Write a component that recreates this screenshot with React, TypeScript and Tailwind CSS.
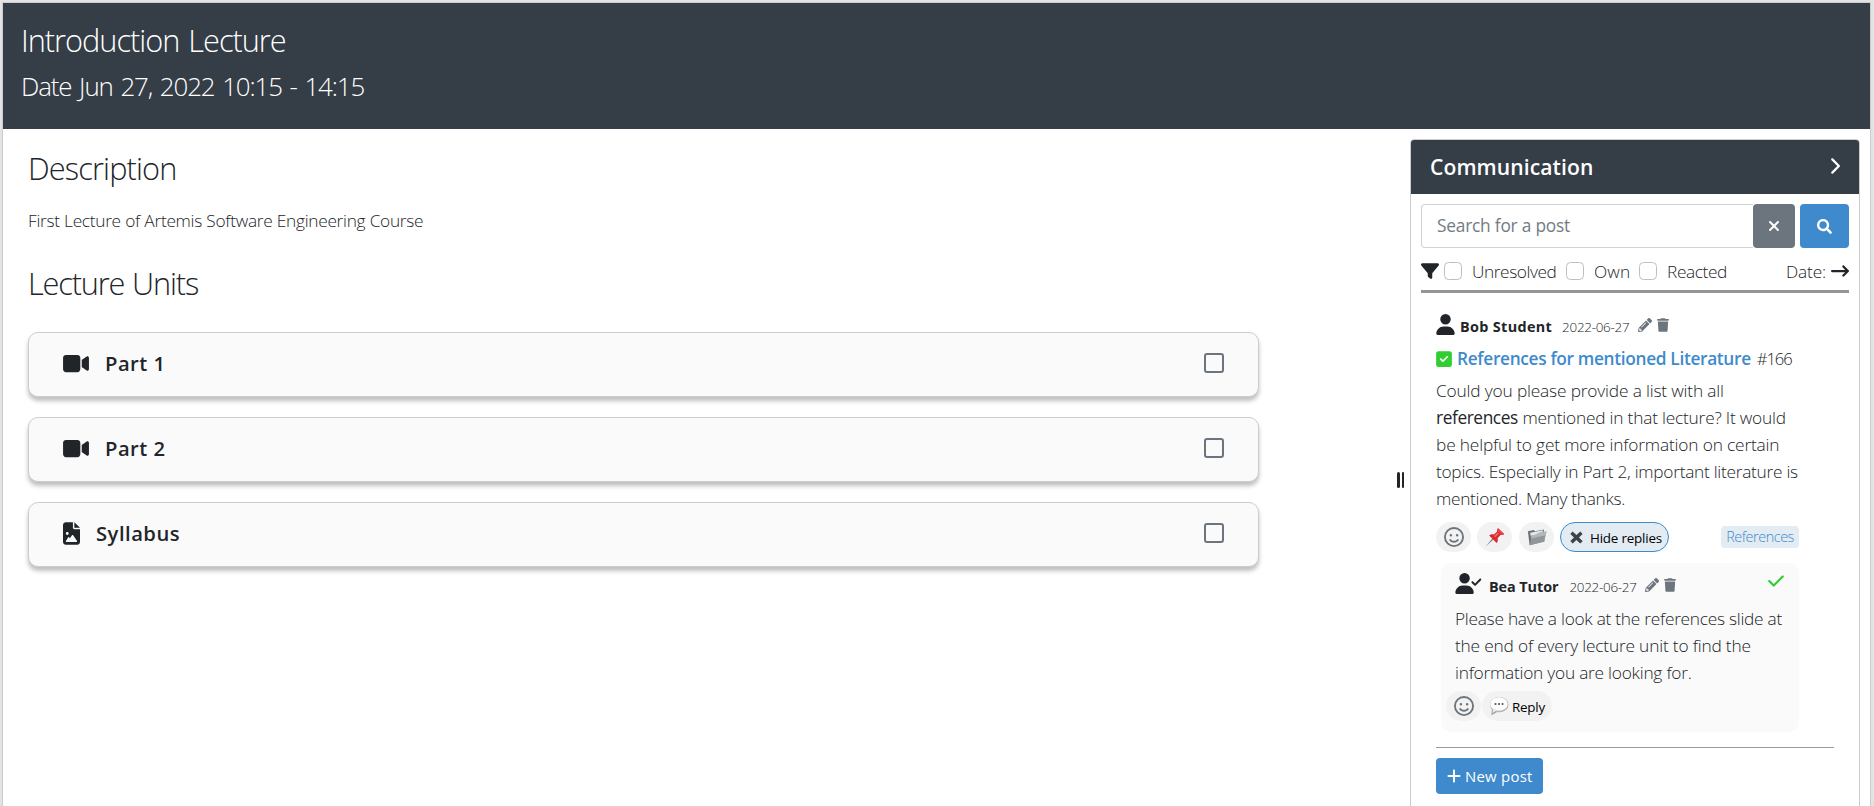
import type { ReactNode } from "react";
import { FaPencilAlt, FaSearch } from "react-icons/fa";
import {
  FaArrowRightLong,
  FaCheck,
  FaChevronRight,
  FaFileImage,
  FaFilter,
  FaPlus,
  FaRegFaceSmile,
  FaSquareCheck,
  FaTrash,
  FaUser,
  FaUserCheck,
  FaVideo,
  FaXmark,
} from "react-icons/fa6";

function PinIcon() {
  return (
    <svg viewBox="0 0 20 20" className="h-5 w-5">
      <path d="M.8 19.200 7.600 11l1.300 1.200Z" fill="#7f8990" />
      <path d="M4.200 8.400c1.300-1.200 3.200-1.300 4.700-.8l3.300-3c-.4-1.200 0-2.600.9-3.400l6 5.700c-1 1-2.200 1.300-3.400.9l-3.100 3.500c.6 1.600.3 3.500-1 4.800Z" fill="#d9282e" />
      <path d="m9 8.900 3.900-3.500 1.200 1.200-3.700 3.700Z" fill="#f4676a" />
      <path d="m13.100 1.200 6 5.700c-.7.700-1.400 1-2.200 1l-4.700-4.500c0-.9.300-1.600.9-2.200Z" fill="#ec4347" />
    </svg>
  );
}

function FolderIcon() {
  return (
    <svg viewBox="0 0 20 20" className="h-5 w-5">
      <path d="M.9 4.200 6.800 3l1.300 1.300 8.700-1.700.6 11.600L2.600 18.200Z" fill="#6a7274" />
      <path d="m3.200 5.800 12.600-2.500.3 4L3.800 9.400Z" fill="#e4e7e7" />
      <path d="m4.600 8.600 5.300-1.200 1.400-1.500 8.200-1.500-2.400 10.400L2.800 18.200Z" fill="#8f9799" />
      <path d="m4.600 8.600 5.300-1.200 1.400-1.500 8.200-1.500-1 3.900L4 11.500Z" fill="#b2b8b9" />
    </svg>
  );
}

function SpeechIcon() {
  return (
    <svg viewBox="0 0 20 20" className="h-5 w-5">
      <path d="M3 12.500 2.300 19.200l6.900-3.600Z" fill="#a2a2a2" />
      <ellipse cx="10.200" cy="8.700" rx="9.300" ry="7.600" fill="#b4b4b4" />
      <ellipse cx="9.900" cy="8" rx="8.800" ry="6.800" fill="#fdfdfd" />
      <path d="M4.400 12 3.400 17.200l4.600-3.100Z" fill="#ececec" />
      <path d="M5.600 7.200h1.800v1.600H5.600zM9.100 7.200h1.800v1.600H9.100zM12.600 7.200h1.800v1.600h-1.800z" fill="#333" />
    </svg>
  );
}

function HeavyCross() {
  return (
    <svg viewBox="0 0 13 13" className="h-[13px] w-[13px]">
      <path d="M2.600.5 6.500 4 10.300.5l2.300 2.400L9 6.500l3.700 3.700-2.500 2.300-3.800-3.600-3.700 3.600-2.400-2.400L4 6.500.3 2.900Z" fill="#414447" />
    </svg>
  );
}

function Unit({ icon, title, tracking }: { icon: ReactNode; title: string; tracking: string }) {
  return (
    <div className="flex h-[65px] items-center justify-between rounded-[10px] border border-[#cdcdcd] bg-[#fafafa] pr-[34px] pb-[3px] pl-[34px] shadow-[0_4px_4px_rgba(0,0,0,0.25)]">
      <div className="flex items-center gap-4 text-[#212529]">
        {icon}
        <span className={`text-[20.2px] leading-8 font-semibold ${tracking}`}>{title}</span>
      </div>
      <span className="h-5 w-5 rounded-[3px] border-2 border-[#6c757d]" />
    </div>
  );
}

function Filter({ label, className }: { label: string; className: string }) {
  return (
    <label className={`flex items-center gap-2.5 ${className}`}>
      <span className="h-[18px] w-[18px] rounded-[4.5px] border border-[#bfbfbf] bg-white" />
      {label}
    </label>
  );
}

function Chip({ children, className = "" }: { children: ReactNode; className?: string }) {
  return <button className={`flex h-[30px] items-center rounded-full ${className}`}>{children}</button>;
}

export default function App() {
  return (
    <div className="h-[806px] overflow-hidden bg-[#e3e3e3] pt-0.5 pr-[3px] pl-0.5 font-['Open_Sans',sans-serif] font-light text-[#212529]">
      <div className="h-[804px] border-x border-t border-[#ccc] bg-white">
        <header className="h-[126px] bg-[#353d47] pt-[18px] pl-[18px] text-white">
          <h1 className="text-[30.7px] leading-[38px] tracking-[-1px] [word-spacing:2px]">Introduction Lecture</h1>
          <h2 className="mt-[11px] text-[25.9px] leading-8 tracking-[-1.1px] [word-spacing:2px]">Date Jun 27, 2022 10:15 - 14:15</h2>
        </header>

        <div className="flex h-[677px] items-start">
          <main className="ml-[25px] w-[1231px] pt-5">
            <h3 className="text-[30.7px] leading-[38px] tracking-[-0.85px]">Description</h3>
            <p className="mt-5 text-[17.3px] leading-[27px] tracking-[-0.29px] [word-spacing:0.2px]">
              First Lecture of Artemis Software Engineering Course
            </p>
            <h3 className="mt-[30px] text-[30.7px] leading-[38px] tracking-[-1.15px] [word-spacing:1px]">Lecture Units</h3>
            <div className="mt-[30px] flex flex-col gap-5">
              <Unit icon={<FaVideo className="h-[23px] w-[26px]" />} title="Part 1" tracking="tracking-[0.5px]" />
              <Unit icon={<FaVideo className="h-[23px] w-[26px]" />} title="Part 2" tracking="tracking-[0.5px]" />
              <Unit icon={<FaFileImage className="h-[23px] w-[17px]" />} title="Syllabus" tracking="tracking-[0.5px]" />
            </div>
          </main>

          <div className="mt-[343px] ml-[138px] flex h-4 w-[7px] justify-between">
            <span className="w-[2.5px] rounded-sm bg-[#212529]" />
            <span className="w-[2.5px] rounded-sm bg-[#212529]" />
          </div>

          <aside className="mt-2.5 ml-1.5 h-[700px] w-[450px] rounded-t border border-[#ccc]">
            <div className="flex h-[54px] items-center justify-between rounded-t-[3px] bg-[#353d47] pr-[19px] pl-[19px] text-white">
              <span className="text-[21.1px] leading-8 font-semibold tracking-[0.08px]">Communication</span>
              <FaChevronRight className="mb-0.5 h-[18px] w-[11px]" />
            </div>

            <div className="mx-2.5 mt-2.5 flex h-11">
              <div className="flex w-[332px] items-center rounded-l border border-r-0 border-[#ced4da] pl-[15px] text-[17.3px] font-normal tracking-[-0.2px] text-[#727b83]">
                Search for a post
              </div>
              <button className="flex w-[42px] items-center justify-center rounded bg-[#6c757d] text-white">
                <FaXmark className="h-4 w-4" />
              </button>
              <button className="ml-[5px] flex w-[49px] items-center justify-center rounded bg-[#3e8acc] text-white">
                <FaSearch className="h-[15px] w-[15px]" />
              </button>
            </div>

            <div className="mx-2.5 flex h-[45px] items-center border-b-[3px] border-[#959595] pt-1 text-[17.3px] leading-[27px]">
              <FaFilter className="mr-[5px] h-[18px] w-[18px]" />
              <Filter label="Unresolved" className="w-[122px] tracking-[-0.42px]" />
              <Filter label="Own" className="w-[73px] tracking-[0.1px]" />
              <Filter label="Reacted" className="tracking-[-0.39px]" />
              <span className="ml-auto tracking-[-0.15px]">Date:</span>
              <FaArrowRightLong className="ml-[5px] h-[18px] w-[18px]" />
            </div>

            <article className="ml-[25px] w-[398px] border-b border-[#999] pt-5">
              <div className="flex h-[22px] items-center">
                <FaUser className="h-[21px] w-[19px]" />
                <span className="mt-[5px] ml-[5px] text-[14.4px] leading-5 font-bold tracking-[0.34px]">Bob Student</span>
                <span className="mt-[5px] ml-2.5 text-[13.4px] leading-5 tracking-[-0.26px]">2022-06-27</span>
                <FaPencilAlt className="mt-0.5 ml-[9px] h-3.5 w-3.5 text-[#6c757d]" />
                <FaTrash className="mt-0.5 ml-[5px] h-3.5 w-3 text-[#6c757d]" />
              </div>
              <div className="mt-2.5 flex h-[27px] items-center text-[17.3px] leading-[27px]">
                <FaSquareCheck className="h-[18px] w-4 text-[#32cd32]" />
                <span className="ml-[5px] font-semibold tracking-[-0.33px] text-[#3e8acc]">References for mentioned Literature</span>
                <span className="ml-1.5 text-[16.6px] tracking-[-1.1px]">#166</span>
              </div>
              <p className="mt-[5px] text-[17.3px] leading-[27px] whitespace-nowrap">
                <span className="tracking-[-0.16px]">Could you please provide a list with all</span>
                <br />
                <span className="font-normal tracking-[-0.4px]">references</span>{" "}
                <span className="tracking-[-0.2px]">mentioned in that lecture? It would</span>
                <br />
                <span className="tracking-[-0.16px]">be helpful to get more information on certain</span>
                <br />
                <span className="tracking-[-0.27px]">topics. Especially in Part 2, important literature is</span>
                <br />
                <span className="tracking-[-0.3px]">mentioned. Many thanks.</span>
              </p>

              <div className="mt-2.5 flex w-[363px] items-center">
                <Chip className="w-[35px] justify-center bg-[#f2f2f2] text-[#6c757d]">
                  <FaRegFaceSmile className="h-5 w-5" />
                </Chip>
                <Chip className="ml-1.5 w-[35px] justify-center bg-[#f2f2f2]">
                  <PinIcon />
                </Chip>
                <Chip className="ml-[7px] w-[35px] justify-center bg-[#f2f2f2]">
                  <FolderIcon />
                </Chip>
                <Chip className="ml-1.5 w-[109px] border border-[#3e8acc] bg-[#e3ebf3] pl-[9px] text-black">
                  <HeavyCross />
                  <span className="mt-0.5 ml-[7px] text-[13.4px] leading-5 font-normal tracking-[-0.2px] whitespace-nowrap">Hide replies</span>
                </Chip>
                <span className="ml-auto flex h-[22px] w-[78px] items-center justify-center rounded bg-[#e3ebf3] text-[14.4px] tracking-[-0.44px] text-[#3e8acc]">
                  References
                </span>
              </div>

              <div className="mt-[11px] mb-[15px] ml-[5px] h-[169px] w-[358px] rounded-[10px] bg-[#fafafa] pt-2.5 pl-[5px]">
                <div className="flex h-[22px] items-center pr-[15px] pl-[9px]">
                  <FaUserCheck className="mb-px h-[21px] w-[27px]" />
                  <span className="mt-[5px] ml-[7px] text-[14.4px] leading-5 font-bold tracking-[-0.07px]">Bea Tutor</span>
                  <span className="mt-[5px] ml-[11px] text-[13.4px] leading-5 tracking-[-0.26px]">2022-06-27</span>
                  <FaPencilAlt className="mt-0.5 ml-2 h-3.5 w-3.5 text-[#6c757d]" />
                  <FaTrash className="mt-0.5 ml-[5px] h-3.5 w-3 text-[#6c757d]" />
                  <FaCheck className="mb-1.5 ml-auto h-[18px] w-4 text-[#32cd32]" />
                </div>
                <p className="mt-2.5 pl-[9px] text-[17.3px] leading-[27px] whitespace-nowrap">
                  <span className="tracking-[-0.26px]">Please have a look at the references slide at</span>
                  <br />
                  <span className="tracking-[-0.18px]">the end of every lecture unit to find the</span>
                  <br />
                  <span className="tracking-[-0.23px]">information you are looking for.</span>
                </p>
                <div className="mt-[5px] flex">
                  <Chip className="w-[35px] justify-center bg-[#f2f2f2] text-[#6c757d]">
                    <FaRegFaceSmile className="h-5 w-5" />
                  </Chip>
                  <Chip className="ml-px w-[70px] bg-[#f2f2f2] pl-[7px] text-black">
                    <SpeechIcon />
                    <span className="mt-0.5 ml-[3px] text-[13.4px] leading-5 font-normal tracking-[-0.24px]">Reply</span>
                  </Chip>
                </div>
              </div>
            </article>

            <button className="mt-2.5 ml-[25px] flex h-9 w-[107px] items-center rounded-sm bg-[#3e8acc] pl-[11px] text-white">
              <FaPlus className="h-4 w-3.5" />
              <span className="ml-1 text-[14.9px] leading-5 font-normal tracking-[0.27px]">New post</span>
            </button>
          </aside>
        </div>
      </div>
    </div>
  );
}
